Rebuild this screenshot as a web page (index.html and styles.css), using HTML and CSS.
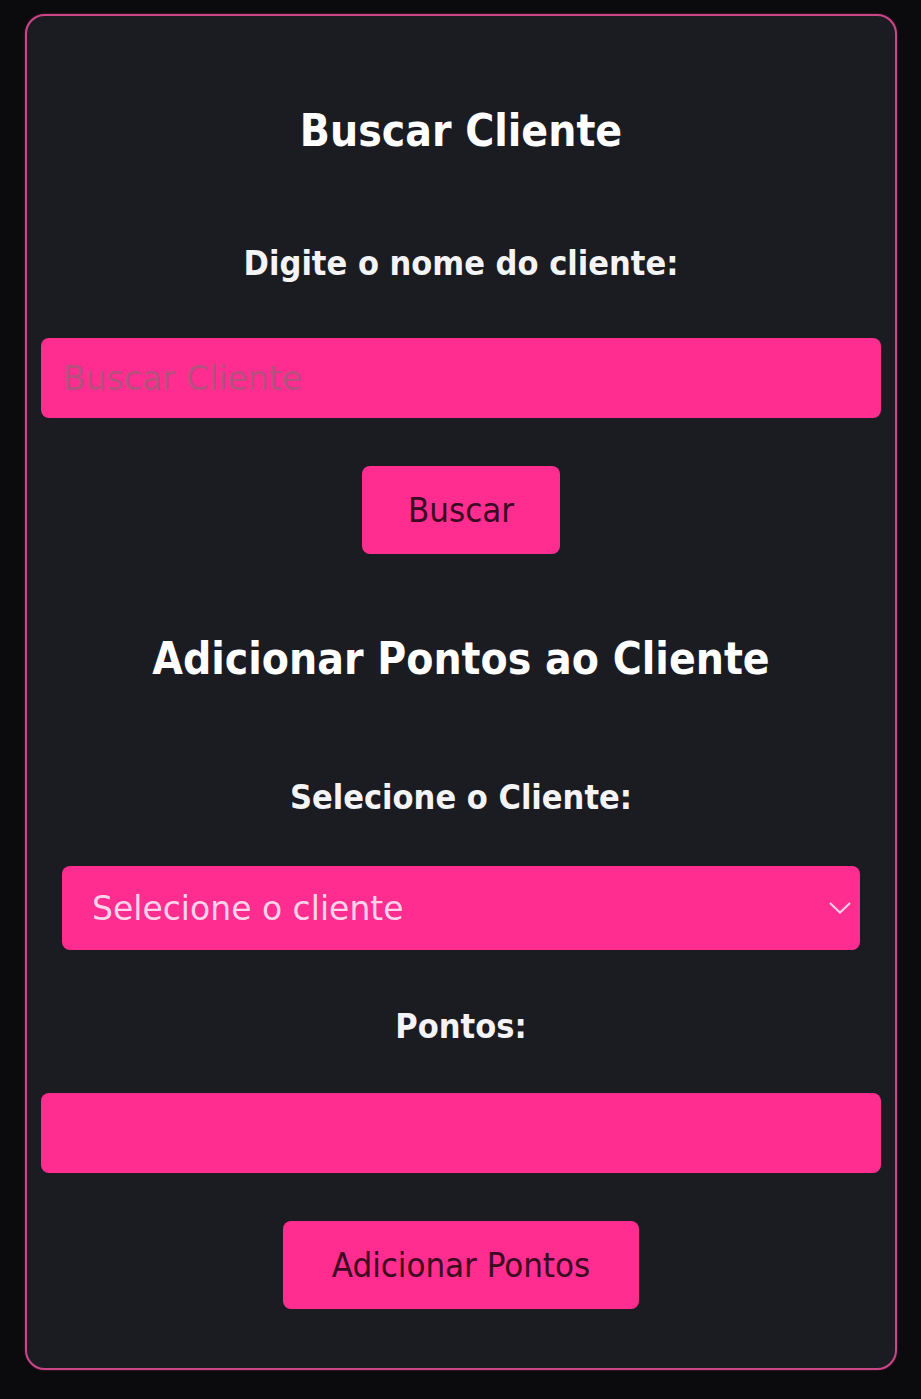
FILE: index.html
```html
<!DOCTYPE html>
<html lang="pt">
<head>
<meta charset="utf-8">
<title>Clientes</title>
<link rel="stylesheet" href="styles.css">
</head>
<body>
<main class="card">
  <h2 class="title">Buscar Cliente</h2>
  <label class="label first-label" for="busca">Digite o nome do cliente:</label>
  <input class="field" id="busca" type="text" placeholder="Buscar Cliente">
  <button class="btn btn-buscar" type="button">Buscar</button>

  <h2 class="title title-2">Adicionar Pontos ao Cliente</h2>
  <label class="label label-select" for="cliente">Selecione o Cliente:</label>
  <div class="select">
    <span class="select-text">Selecione o cliente</span>
    <svg class="chevron" width="22" height="12" viewBox="0 0 22 12"><path d="M1 1 L11 10.5 L21 1" fill="none" stroke="#ffd3ea" stroke-width="2"/></svg>
  </div>
  <label class="label label-pontos" for="pontos">Pontos:</label>
  <input class="field field-pontos" id="pontos" type="text">
  <button class="btn btn-add" type="button">Adicionar Pontos</button>
</main>
</body>
</html>
```
FILE: styles.css
```css
html, body {
  margin: 0;
  padding: 0;
  background: #0b0b0d;
}
body {
  padding: 14px 24px 30px 25px;
  font-family: "DejaVu Sans Condensed", "Liberation Sans", sans-serif;
}
.card {
  box-sizing: border-box;
  width: 872px;
  height: 1356px;
  background: #1b1b22;
  border: 2px solid #c94688;
  border-radius: 20px;
  box-shadow: 0 0 2px rgba(255, 45, 143, 0.5);
  padding: 89px 14px 0 14px;
  display: flex;
  flex-direction: column;
  align-items: center;
}
.title {
  margin: 0;
  color: #ffffff;
  font-size: 44px;
  line-height: 52px;
  font-weight: 700;
  text-align: center;
}
.title-2 { margin-top: 79px; }
.label {
  display: block;
  color: #f4f4f6;
  font-size: 34px;
  line-height: 40px;
  font-weight: 700;
  text-align: center;
}
.first-label { margin-top: 86px; }
.label-select { margin-top: 92px; }
.label-pontos { margin-top: 56px; }
.field {
  box-sizing: border-box;
  width: 840px;
  height: 80px;
  margin-top: 55px;
  background: #ff2d8f;
  border: none;
  border-radius: 8px;
  padding: 0 22px;
  font-family: "DejaVu Sans", "Noto Sans", sans-serif;
  font-size: 33px;
  color: #3b0a22;
  outline: none;
}
.field::placeholder { color: #b6507f; }
.field-pontos { margin-top: 47px; }
.btn {
  box-sizing: border-box;
  height: 88px;
  margin-top: 48px;
  background: #ff2d8f;
  border: none;
  border-radius: 8px;
  color: #3b0a22;
  font-family: "DejaVu Sans Condensed", sans-serif;
  font-size: 34.5px;
  font-weight: 400;
  padding: 0;
}
.btn-buscar { width: 198px; }
.btn-add { width: 356px; }
.select {
  box-sizing: border-box;
  width: 798px;
  height: 84px;
  margin-top: 49px;
  background: #ff2d8f;
  border-radius: 8px;
  padding: 0 9px 0 30px;
  display: flex;
  align-items: center;
  justify-content: space-between;
}
.select-text {
  font-family: "DejaVu Sans", "Noto Sans", sans-serif;
  font-size: 33px;
  color: #ffd3ea;
}
.chevron { display: block; }
```
